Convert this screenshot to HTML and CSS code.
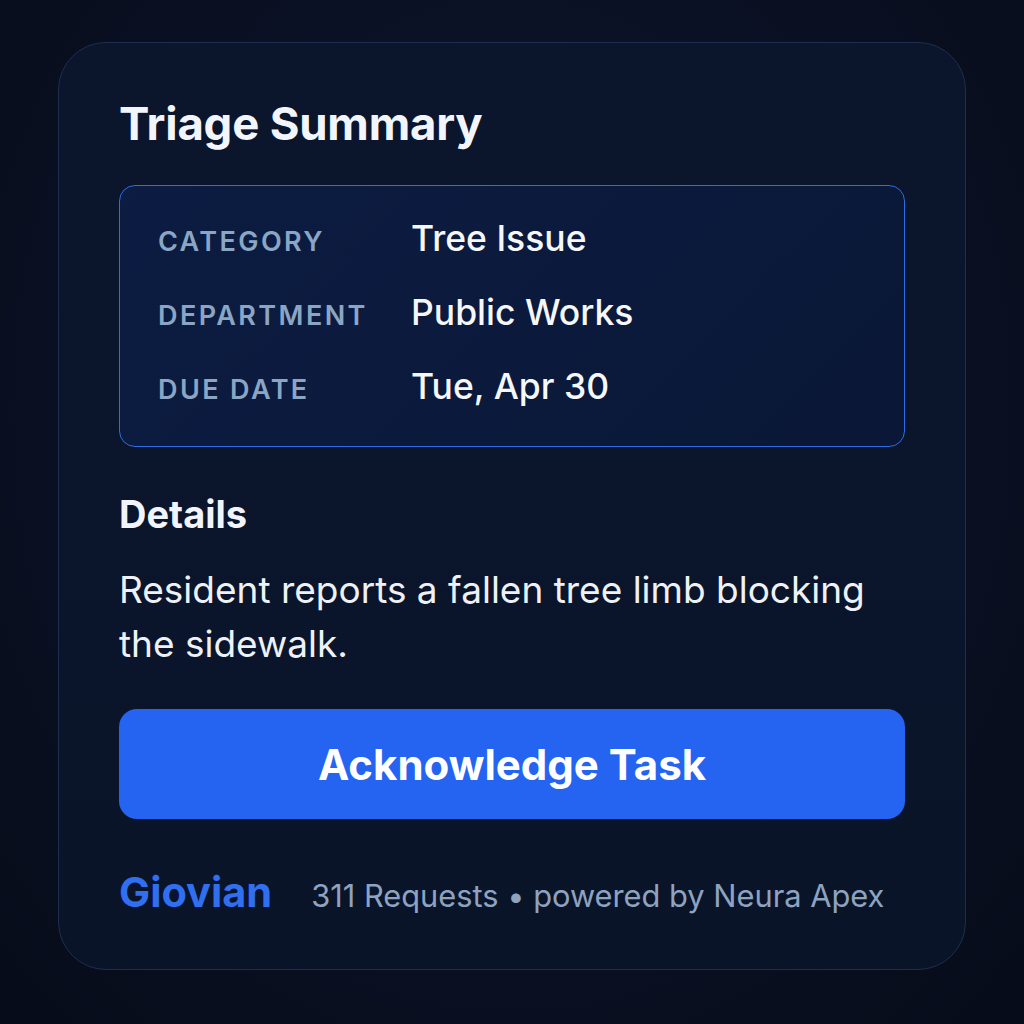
FILE: index.html
```html
<!DOCTYPE html>
<html lang="en">
<head>
<meta charset="utf-8">
<title>Triage Summary</title>
<link rel="stylesheet" href="styles.css">
</head>
<body>
<main class="page">
  <section class="card">
    <h1 class="title">Triage Summary</h1>
    <div class="info">
      <div class="row"><span class="label">CATEGORY</span><span class="value">Tree Issue</span></div>
      <div class="row"><span class="label">DEPARTMENT</span><span class="value">Public Works</span></div>
      <div class="row"><span class="label">DUE DATE</span><span class="value">Tue, Apr 30</span></div>
    </div>
    <h2 class="subtitle">Details</h2>
    <p class="body">Resident reports a fallen tree limb blocking the sidewalk.</p>
    <button class="btn">Acknowledge Task</button>
    <footer class="foot">
      <span class="brand">Giovian</span>
      <span class="meta">311 Requests • powered by Neura Apex</span>
    </footer>
  </section>
</main>
</body>
</html>
```

FILE: styles.css
```css
* { box-sizing: border-box; }
html, body { margin: 0; padding: 0; }
body {
  width: 1024px;
  height: 1024px;
  background: radial-gradient(ellipse at 50% 40%, #0f1830 0%, #0a1022 60%, #070c1a 100%);
  font-family: Inter, "Noto Sans", sans-serif;
  color: #f1f4fa;
}
.page {
  padding: 42px 58px 0 58px;
}
.card {
  width: 908px;
  height: 928px;
  border-radius: 48px;
  border: 1.5px solid #1d2e4e;
  background: linear-gradient(180deg, #0b152c 0%, #0a1429 100%);
  padding: 52px 60px 0 60px;
  display: flex;
  flex-direction: column;
}
.title {
  margin: 0;
  font-size: 45.5px;
  line-height: 58px;
  font-weight: 700;
  color: #f2f5fb;
  letter-spacing: -0.2px;
}
.info {
  margin-top: 32px;
  height: 262px;
  border: 1.5px solid #2e6be6;
  border-radius: 16px;
  background: linear-gradient(135deg, #0c1c42 0%, #0b1a3c 50%, #0a1736 100%);
  padding: 18px 38px 22px 38px;
  display: flex;
  flex-direction: column;
  justify-content: center;
  gap: 28px;
}
.row {
  display: flex;
  align-items: baseline;
  height: 46px;
}
.label {
  width: 253px;
  font-size: 27px;
  font-weight: 600;
  letter-spacing: 2.4px;
  color: #8aa6c4;
}
.value {
  font-size: 35.5px;
  font-weight: 450;
  color: #f5f7fb;
}
.subtitle {
  margin: 44px 0 0 0;
  font-size: 38px;
  line-height: 46px;
  font-weight: 700;
  color: #f1f4fa;
}
.body {
  margin: 26px 0 0 0;
  font-size: 37px;
  line-height: 54px;
  font-weight: 400;
  color: #eef2f8;
}
.btn {
  margin-top: 38px;
  height: 110px;
  border: none;
  border-radius: 18px;
  background: #2464f0;
  color: #ffffff;
  font-family: Inter, "Noto Sans", sans-serif;
  font-size: 42px;
  font-weight: 700;
}
.foot {
  margin-top: 48px;
  display: flex;
  align-items: baseline;
  gap: 39px;
}
.brand {
  font-size: 41.5px;
  font-weight: 700;
  color: #2f6ff0;
}
.meta {
  font-size: 30.8px;
  color: #8ea3c0;
}
```
